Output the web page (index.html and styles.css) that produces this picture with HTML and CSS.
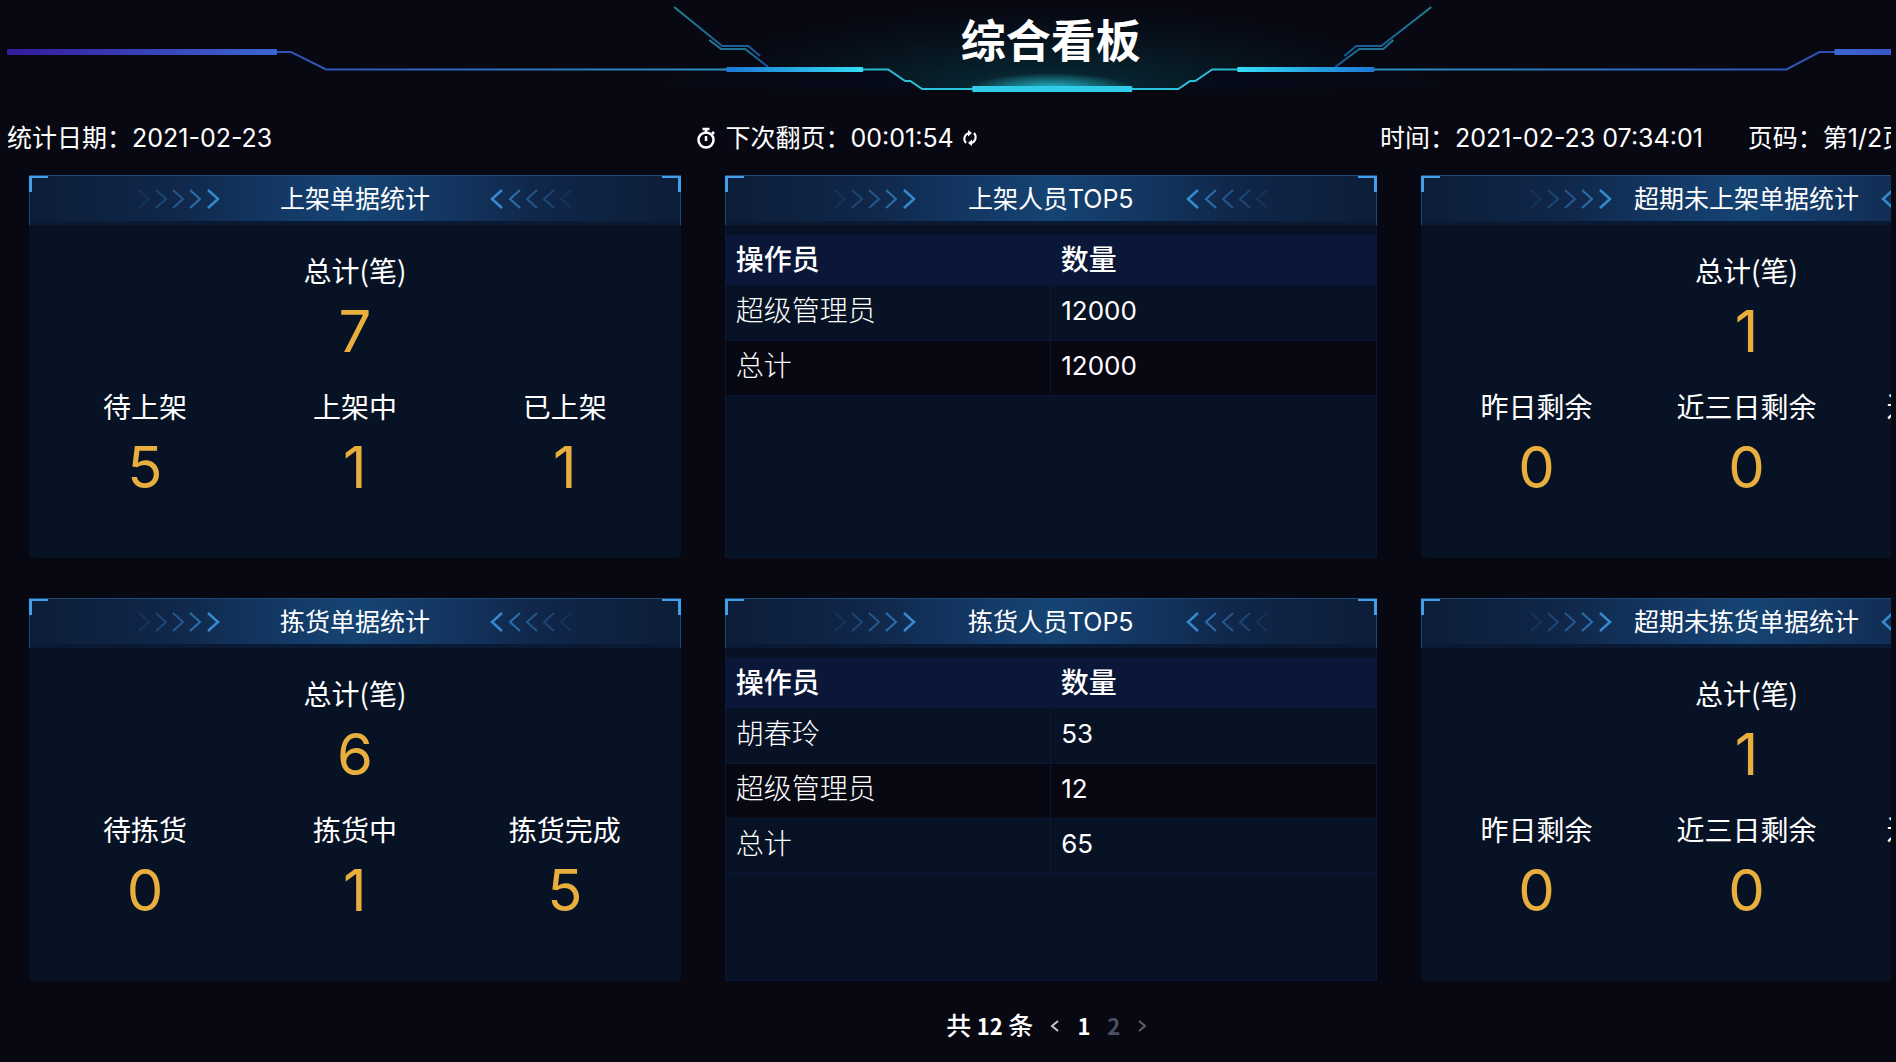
FILE: index.html
```html
<!DOCTYPE html>
<html lang="zh-CN">
<head>
<meta charset="utf-8">
<title>综合看板</title>
<link rel="stylesheet" href="styles.css">
</head>
<body>
<svg class="defs" aria-hidden="true">
  <symbol id="chevrons" viewBox="0 0 82 20">
    <g fill="none" stroke="#3a93dc" stroke-width="2">
      <path d="M1 1l10 9-10 9" opacity=".15"/>
      <path d="M18 1l10 9-10 9" opacity=".3"/>
      <path d="M35 1l10 9-10 9" opacity=".45"/>
      <path d="M52 1l10 9-10 9" opacity=".65"/>
      <path d="M70 1l10 9-10 9" stroke-width="2.500" opacity=".9"/>
    </g>
  </symbol>
</svg>
<div class="viewport">
<div class="board">
  <header class="banner">
    <svg class="banner-art" viewBox="0 0 2087 100" preserveAspectRatio="none" aria-hidden="true">
      <defs>
        <linearGradient id="edge" gradientUnits="userSpaceOnUse" x1="0" y1="0" x2="2086" y2="0">
          <stop offset="0" stop-color="#3a1fa0"/><stop offset=".13" stop-color="#2f50b4"/>
          <stop offset=".34" stop-color="#2b8fc0"/><stop offset=".44" stop-color="#2cc3dc"/>
          <stop offset=".56" stop-color="#2cc3dc"/><stop offset=".66" stop-color="#2b8fc0"/>
          <stop offset=".87" stop-color="#2f50b4"/><stop offset="1" stop-color="#3a1fa0"/>
        </linearGradient>
        <linearGradient id="barL"><stop offset="0" stop-color="#341a9c"/><stop offset="1" stop-color="#3b66d2"/></linearGradient>
        <linearGradient id="barR"><stop offset="0" stop-color="#3b66d2"/><stop offset="1" stop-color="#341a9c"/></linearGradient>
        <linearGradient id="midL"><stop offset="0" stop-color="#1c78d4"/><stop offset="1" stop-color="#35dcf6"/></linearGradient>
        <linearGradient id="midR"><stop offset="0" stop-color="#35dcf6"/><stop offset="1" stop-color="#1c78d4"/></linearGradient>
        <linearGradient id="wing" x1="0" y1="0" x2="0" y2="1"><stop offset="0" stop-color="#23808f"/><stop offset="1" stop-color="#17569a"/></linearGradient>
        <radialGradient id="well" gradientUnits="userSpaceOnUse" cx="0" cy="0" r="1" gradientTransform="translate(1044 92) scale(360 84)"><stop offset="0" stop-color="#07303c"/><stop offset="1" stop-color="#06222c" stop-opacity="0"/></radialGradient>
        <radialGradient id="shade"><stop offset="0" stop-color="#050d24"/><stop offset="1" stop-color="#050d24" stop-opacity="0"/></radialGradient>
        <radialGradient id="glow" gradientUnits="userSpaceOnUse" cx="0" cy="0" r="1" gradientTransform="translate(1044 89) scale(84 16)"><stop offset="0" stop-color="#2fd9ea" stop-opacity=".85"/><stop offset="1" stop-color="#2fd9ea" stop-opacity="0"/></radialGradient>
      </defs>
      <path d="M653 92V70H881L915 92zM1433 92V70H1205L1171 92z" fill="url(#shade)"/>
      <path d="M667 7L715 46H741L770 69H881L898 81H903L915 89H1171L1183 81H1188L1205 69H1327L1352 49H1376L1424 7z" fill="url(#well)"/>
      <rect x="950" y="70" width="190" height="19" fill="url(#glow)"/>
      <g fill="none" stroke="url(#edge)" stroke-width="2">
        <path d="M270 52H284L319 69.500H881L898 81H903L915 89H1171L1183 81H1188L1205 69.500H1779L1812 52H1830"/>
      </g>
      <g fill="none" stroke="url(#wing)" stroke-width="2">
        <path d="M667 7L715 46H741L753 56"/><path d="M702 40L714 49H738L761 67"/>
        <path d="M1424 7L1374 46H1349L1337 56"/><path d="M1386 40L1376 49H1352L1328 67"/>
      </g>
      <rect x="0" y="49" width="270" height="6" rx="1" fill="url(#barL)"/>
      <rect x="1827" y="49" width="259" height="6" rx="1" fill="url(#barR)"/>
      <rect x="719" y="67" width="137" height="5" rx="1" fill="url(#midL)"/>
      <rect x="1230" y="67" width="137" height="5" rx="1" fill="url(#midR)"/>
      <rect x="965" y="86" width="160" height="6" rx="1" fill="#2fcdea"/>
    </svg>
    <h1 class="banner-title">综合看板</h1>
  </header>

  <div class="info">
    <div>统计日期：<time>2021-02-23</time></div>
    <div class="countdown">
      <svg class="icon-timer" viewBox="0 0 22 22" aria-hidden="true"><g fill="none" stroke="#fff" stroke-width="2.500"><circle cx="11" cy="13" r="7.500"/><path d="M7.500 2h7M11 2v3M11 9v5M17 5l2 2"/></g></svg>
      <span>下次翻页：<time>00:01:54</time></span>
      <button class="plain" type="button" aria-label="刷新"><svg class="icon-refresh" viewBox="0 0 16 18"><g fill="none" stroke="#fff" stroke-width="2"><path d="M7 4A6 6 0 0 0 4 14M9 14A6 6 0 0 0 12 4"/></g><path d="M6 1l4 3-4 3.500zM10 10.500V17l-4-3z" fill="#fff"/></svg></button>
    </div>
    <div class="clock"><span>时间：<time>2021-02-23 07:34:01</time></span><span>页码：第1/2页</span></div>
  </div>

  <main class="cards">
    <section class="card">
      <div class="card-head"><svg class="chev"><use href="#chevrons"/></svg><h2>上架单据统计</h2><svg class="chev flip"><use href="#chevrons"/></svg></div>
      <div class="stats">
        <dl class="stat total"><dt>总计(笔)</dt><dd>7</dd></dl>
        <dl class="stat"><dt>待上架</dt><dd>5</dd></dl>
        <dl class="stat"><dt>上架中</dt><dd>1</dd></dl>
        <dl class="stat"><dt>已上架</dt><dd>1</dd></dl>
      </div>
    </section>
    <section class="card framed">
      <div class="card-head"><svg class="chev"><use href="#chevrons"/></svg><h2>上架人员TOP5</h2><svg class="chev flip"><use href="#chevrons"/></svg></div>
      <table class="rank">
        <thead><tr><th>操作员</th><th>数量</th></tr></thead>
        <tbody>
          <tr><td>超级管理员</td><td class="num">12000</td></tr>
          <tr><td>总计</td><td class="num">12000</td></tr>
        </tbody>
      </table>
    </section>
    <section class="card">
      <div class="card-head"><svg class="chev"><use href="#chevrons"/></svg><h2>超期未上架单据统计</h2><svg class="chev flip"><use href="#chevrons"/></svg></div>
      <div class="stats">
        <dl class="stat total"><dt>总计(笔)</dt><dd>1</dd></dl>
        <dl class="stat"><dt>昨日剩余</dt><dd>0</dd></dl>
        <dl class="stat"><dt>近三日剩余</dt><dd>0</dd></dl>
        <dl class="stat"><dt>近七日剩余</dt><dd>1</dd></dl>
      </div>
    </section>
    <section class="card">
      <div class="card-head"><svg class="chev"><use href="#chevrons"/></svg><h2>拣货单据统计</h2><svg class="chev flip"><use href="#chevrons"/></svg></div>
      <div class="stats">
        <dl class="stat total"><dt>总计(笔)</dt><dd>6</dd></dl>
        <dl class="stat"><dt>待拣货</dt><dd>0</dd></dl>
        <dl class="stat"><dt>拣货中</dt><dd>1</dd></dl>
        <dl class="stat"><dt>拣货完成</dt><dd>5</dd></dl>
      </div>
    </section>
    <section class="card framed">
      <div class="card-head"><svg class="chev"><use href="#chevrons"/></svg><h2>拣货人员TOP5</h2><svg class="chev flip"><use href="#chevrons"/></svg></div>
      <table class="rank">
        <thead><tr><th>操作员</th><th>数量</th></tr></thead>
        <tbody>
          <tr><td>胡春玲</td><td class="num">53</td></tr>
          <tr><td>超级管理员</td><td class="num">12</td></tr>
          <tr><td>总计</td><td class="num">65</td></tr>
        </tbody>
      </table>
    </section>
    <section class="card">
      <div class="card-head"><svg class="chev"><use href="#chevrons"/></svg><h2>超期未拣货单据统计</h2><svg class="chev flip"><use href="#chevrons"/></svg></div>
      <div class="stats">
        <dl class="stat total"><dt>总计(笔)</dt><dd>1</dd></dl>
        <dl class="stat"><dt>昨日剩余</dt><dd>0</dd></dl>
        <dl class="stat"><dt>近三日剩余</dt><dd>0</dd></dl>
        <dl class="stat"><dt>近七日剩余</dt><dd>1</dd></dl>
      </div>
    </section>
  </main>

  <nav class="pager" aria-label="分页">
    <span class="pager-total">共 <b>12</b> 条</span>
    <button class="plain" type="button" aria-label="上一页"><svg class="arrow" viewBox="0 0 10 14"><path d="M8 3L2 8l6 5" fill="none" stroke="#c8cad0" stroke-width="2"/></svg></button>
    <button class="plain page current" type="button">1</button>
    <button class="plain page" type="button">2</button>
    <button class="plain" type="button" aria-label="下一页"><svg class="arrow" viewBox="0 0 10 14"><path d="M2 3l6 5-6 5" fill="none" stroke="#5f6066" stroke-width="2"/></svg></button>
  </nav>
</div>
</div>
</body>
</html>
```
FILE: styles.css
```css
* { box-sizing: border-box; }
body {
  margin: 0;
  background: #070812;
  color: #fff;
  font: 25px/36px Inter, "Noto Sans CJK SC", sans-serif;
}
h1, h2, dl, dd { margin: 0; font-weight: 400; }
.defs { position: absolute; width: 0; height: 0; }
.viewport { margin: 0 5px 0 7px; overflow: hidden; }
.board { width: 110.8%; }

.banner { position: relative; height: 100px; text-align: center; }
.banner-art { position: absolute; inset: 0; width: 100%; height: 100%; }
.banner-title { position: relative; font-size: 45px; line-height: 84px; font-weight: 700; }

.info {
  display: grid;
  grid-template-columns: repeat(3, 1fr);
  padding: 20px 28px 0 0;
  white-space: nowrap;
}
.countdown { display: flex; align-items: center; gap: 8px; padding-left: 2px; }
.icon-timer { display: block; width: 22px; height: 22px; }
.icon-refresh { display: block; width: 16px; height: 18px; }
.clock { display: flex; gap: 45px; }
.plain { padding: 0; border: 0; background: none; color: inherit; font: inherit; cursor: pointer; }

.cards {
  display: grid;
  grid-template-columns: repeat(3, 1fr);
  gap: 40px 44px;
  padding: 19px 22px 0;
}
.card { min-height: 383px; background: #081225; border-radius: 4px; }
.card-head {
  position: relative;
  display: flex;
  align-items: center;
  justify-content: space-between;
  height: 50px;
  padding: 0 108px 4px;
  border: solid #1f4a74;
  border-width: 1px 1px 0;
  background:
    linear-gradient(#0a1a35, #0a1a35) bottom / 100% 4px no-repeat,
    linear-gradient(90deg, #0c1d38, #10274a 22%, #143c6a 42%, #154473 50%, #143c6a 58%, #10274a 78%, #0c1d38);
}
.card-head::before, .card-head::after {
  content: "";
  position: absolute;
  top: 0;
  width: 16px;
  height: 14px;
  border: solid #3f9fea;
}
.card-head::before { left: -1px; border-width: 2px 0 0 3px; }
.card-head::after { right: -1px; border-width: 2px 3px 0 0; }
.card-head h2 { font-size: 25px; white-space: nowrap; }
.chev { width: 82px; height: 20px; }
.flip { transform: scaleX(-1); }

.stats {
  display: grid;
  grid-template-columns: repeat(3, 1fr);
  row-gap: 14px;
  padding: 25px 11px 0;
  text-align: center;
}
.total { grid-column: 1 / -1; }
.stat dt { font-family: "Noto Sans CJK SC", sans-serif; font-size: 28px; line-height: 40px; white-space: nowrap; }
.stat dd { font-size: 58px; line-height: 82px; color: #e8af3e; }

.framed { border: solid #0a1738; border-width: 0 1px 1px; border-radius: 0; }
.framed .card-head { margin: 0 -1px; }
.rank {
  width: 100%;
  margin-top: 10px;
  border-collapse: collapse;
  table-layout: fixed;
  text-align: left;
  font-size: 28px;
}
.rank th { height: 50px; padding: 0 10px; background: #0a1738; font-weight: 500; }
.rank td { height: 55px; padding: 0 10px 3px; border: solid #0a1738; border-width: 0 0 1px; font-weight: 300; }
.rank td + td { border-left-width: 1px; font-weight: 400; }
.rank .num { font-size: 26px; }
.rank tbody tr:nth-child(even) { background: #070812; }

.pager {
  display: flex;
  align-items: center;
  justify-content: center;
  gap: 17px;
  padding: 25px 8px 0 0;
  font-family: "Noto Sans CJK SC", sans-serif;
}
.pager-total { font-weight: 500; }
.pager b, .page { font-size: 22px; font-weight: 700; }
.page { color: #4a5068; }
.current { color: #fff; }
.arrow { display: block; width: 10px; height: 14px; }
```
